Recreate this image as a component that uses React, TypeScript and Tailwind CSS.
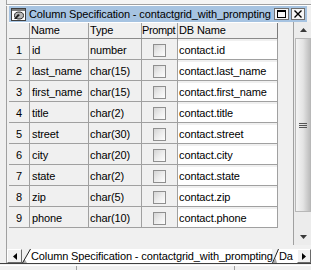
import React from "react";

const rows = [
  ["1", "id", "number", "contact.id"],
  ["2", "last_name", "char(15)", "contact.last_name"],
  ["3", "first_name", "char(15)", "contact.first_name"],
  ["4", "title", "char(2)", "contact.title"],
  ["5", "street", "char(30)", "contact.street"],
  ["6", "city", "char(20)", "contact.city"],
  ["7", "state", "char(2)", "contact.state"],
  ["8", "zip", "char(5)", "contact.zip"],
  ["9", "phone", "char(10)", "contact.phone"],
];

const font = "font-['Liberation_Sans',Arial,sans-serif] text-[11px] tracking-[-0.12px]";

function Checkbox() {
  return (
    <div className="w-[13px] h-[13px] border border-[#8f8f8f] bg-gradient-to-br from-[#d4d4d4] via-[#ececec] to-[#fdfdfd]" />
  );
}

function TitleIcon() {
  return (
    <svg width="15" height="13" viewBox="0 0 15 13">
      <rect x="0.5" y="0.5" width="14" height="12" fill="#fff" stroke="#404040" />
      <rect x="1" y="1" width="13" height="2" fill="#7a7a7a" />
      <ellipse cx="8" cy="7.5" rx="4.5" ry="3.5" fill="#b8b8b8" stroke="#303030" />
      <path d="M3 11 L7 6 L9 7 L5 11 Z" fill="#202020" />
    </svg>
  );
}

export default function App() {
  return (
    <div className={`w-[311px] h-[270px] bg-[#f0f0f0] overflow-hidden flex flex-col text-black ${font}`}>
      {/* top strip of the parent frame */}
      <div className="h-[4px] flex shrink-0">
        <div className="w-[6px]" />
        <div className="w-px bg-[#a0a0a0]" />
        <div className="flex-1 bg-[#f4f4f4]" />
      </div>
      <div className="h-px bg-[#a0a0a0] ml-[6px] shrink-0" />
      <div className="h-px bg-white ml-[7px] shrink-0" />

      <div className="flex shrink-0">
        <div className="w-[6px]" />
        <div className="w-px bg-[#a0a0a0]" />
        <div className="flex-1 flex flex-col min-w-0">
          {/* title bar */}
          <div className="flex ml-[2px] mr-[4px]">
            <div className="flex-1 h-[16px] bg-[#a6c3e1] flex items-center pl-[2px]">
              <TitleIcon />
              <span className="ml-[3px] whitespace-nowrap leading-none">
                Column Specification - contactgrid_with_prompting
              </span>
              <div className="ml-auto flex gap-[2px] pr-[2px]">
                <div className="w-[15px] h-[12px] bg-[#f6f6f6] border border-[#6f6f6f] flex items-center justify-center">
                  <div className="w-[9px] h-[8px] border border-black border-t-2" />
                </div>
                <div className="w-[14px] h-[12px] bg-[#f6f6f6] border border-[#6f6f6f] flex items-center justify-center">
                  <svg width="8" height="8" viewBox="0 0 8 8">
                    <path d="M0.5 0.5 L7.5 7.5 M7.5 0.5 L0.5 7.5" stroke="#000" strokeWidth="1.4" />
                  </svg>
                </div>
              </div>
            </div>
          </div>

          {/* grid + scrollbar */}
          <div className="flex h-[223px]">
            <div className="ml-[2px] w-[269px] flex flex-col">
              <div className="flex h-[17px] border-b border-[#8a8a8a] border-t border-t-white">
                <div className="w-[21px] border-r border-[#a0a0a0]" />
                <div className="w-[59px] border-r border-[#a0a0a0] pl-[1px] flex items-center">Name</div>
                <div className="w-[53px] border-r border-[#a0a0a0] pl-[1px] flex items-center">Type</div>
                <div className="w-[36px] border-r border-[#a0a0a0] flex items-center tracking-[-0.4px] overflow-hidden whitespace-nowrap">Prompt</div>
                <div className="flex-1 border-r border-[#7a7a7a] pl-[1px] flex items-center">DB Name</div>
              </div>
              {rows.map((r) => (
                <div key={r[0]} className="flex h-[21px] border-b border-[#a0a0a0]">
                  <div className="w-[21px] border-r border-[#a0a0a0] flex items-center justify-center pt-[2px]">
                    {r[0]}
                  </div>
                  <div className="w-[59px] border-r border-[#a0a0a0] pl-[2px] pt-[2px] flex items-center">{r[1]}</div>
                  <div className="w-[53px] border-r border-[#a0a0a0] pl-[1px] pt-[2px] flex items-center">{r[2]}</div>
                  <div className="w-[36px] border-r border-[#a0a0a0] pt-[2px] flex items-center justify-center">
                    <Checkbox />
                  </div>
                  <div className="flex-1 border-r border-[#a0a0a0] pt-[2px] flex">
                    <div className="flex-1 bg-white flex items-center pl-[1px]">{r[3]}</div>
                  </div>
                </div>
              ))}
            </div>
            <div className="w-[15px]" />
            {/* vertical scrollbar */}
            <div className="w-[18px] border-l border-[#a0a0a0] flex flex-col bg-[#ececec]">
              <div className="h-[16px] flex items-center justify-center pl-[2px]">
                <svg width="7" height="4" viewBox="0 0 7 4">
                  <path d="M3.5 0 L7 4 L0 4 Z" fill="#3a3a3a" />
                </svg>
              </div>
              <div className="h-[174px] ml-px bg-gradient-to-r from-[#f4f4f4] via-[#e4e4e4] to-[#bdbdbd] border border-[#b8b8b8] flex items-center justify-center">
                <div className="flex flex-col gap-px">
                  <div className="w-[8px] h-px bg-[#555]" />
                  <div className="w-[8px] h-px bg-[#555]" />
                  <div className="w-[8px] h-px bg-[#555]" />
                </div>
              </div>
              <div className="flex-1" />
              <div className="h-[16px] flex items-center justify-center pl-[2px]">
                <svg width="7" height="4" viewBox="0 0 7 4">
                  <path d="M0 0 L7 0 L3.5 4 Z" fill="#3a3a3a" />
                </svg>
              </div>
            </div>
          </div>
        </div>
      </div>

      {/* tab strip */}
      <div className="flex h-[18px] shrink-0 pl-[6px] items-end">
        <div className="w-px h-full bg-[#a0a0a0]" />
        <div className="w-[15px] h-[14px] bg-[#f0f0f0] border border-t-white border-l-white border-r-[#6a6a6a] border-b-[#6a6a6a] flex items-center justify-center">
          <svg width="4" height="7" viewBox="0 0 4 7">
            <path d="M4 0 L0 3.5 L4 7 Z" fill="#000" />
          </svg>
        </div>
        <svg width="9" height="14" viewBox="0 0 9 14" className="shrink-0">
          <path d="M9 0 L9 14 L0 14 Z" fill="#fff" />
          <path d="M0 14 L5 14 L2.5 10 Z" fill="#a8a8a8" />
          <path d="M0.5 14 L8.5 0" stroke="#202020" />
        </svg>
        <div className="w-[241px] h-[14px] bg-white flex items-center whitespace-nowrap leading-none">
          Column Specification - contactgrid_with_prompting
        </div>
        <svg width="7" height="14" viewBox="0 0 7 14" className="shrink-0">
          <path d="M0 14 L6 0 L7 0 L7 14 Z" fill="#fff" />
          <path d="M1 14 L5 14 L3.5 9 Z" fill="#a8a8a8" />
          <path d="M0.5 14 L6.5 0" stroke="#202020" />
        </svg>
        <div className="w-[18px] h-[14px] bg-white overflow-hidden flex items-center whitespace-nowrap leading-none">Da</div>
        <div className="w-[14px] h-[14px] bg-[#f0f0f0] border border-t-white border-l-white border-r-[#6a6a6a] border-b-[#6a6a6a] flex items-center justify-center">
          <svg width="4" height="7" viewBox="0 0 4 7">
            <path d="M0 0 L4 3.5 L0 7 Z" fill="#000" />
          </svg>
        </div>
      </div>
      <div className="h-px bg-[#404040] shrink-0" />
      {/* parent status bar */}
      <div className="h-px shrink-0" />
      <div className="h-px bg-white shrink-0" />
      <div className="flex-1 flex">
        <div className="w-[77px] border-r border-[#a0a0a0]" />
        <div className="w-[158px] border-r border-[#a0a0a0]" />
        <div className="flex-1" />
      </div>
    </div>
  );
}
